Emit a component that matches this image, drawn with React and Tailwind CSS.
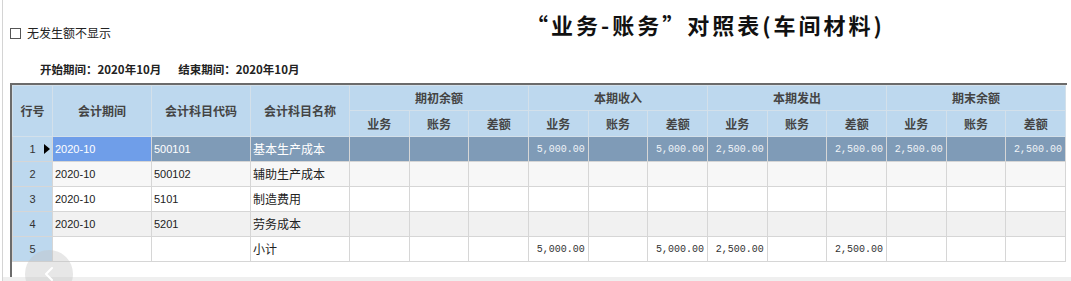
import React from 'react';

const groups = ['期初余额', '本期收入', '本期发出', '期末余额'];
const subs = ['业务', '账务', '差额'];

const rows = [
  { no: 1, period: '2020-10', code: '500101', name: '基本生产成本', vals: ['', '', '', '5,000.00', '', '5,000.00', '2,500.00', '', '2,500.00', '2,500.00', '', '2,500.00'], selected: true },
  { no: 2, period: '2020-10', code: '500102', name: '辅助生产成本', vals: Array(12).fill(''), bg: 'bg-[#f7f7f7]' },
  { no: 3, period: '2020-10', code: '5101', name: '制造费用', vals: Array(12).fill(''), bg: 'bg-white' },
  { no: 4, period: '2020-10', code: '5201', name: '劳务成本', vals: Array(12).fill(''), bg: 'bg-[#f1f1f1]' },
  { no: 5, period: '', code: '', name: '小计', vals: ['', '', '', '5,000.00', '', '5,000.00', '2,500.00', '', '2,500.00', '', '', ''], bg: 'bg-white' },
];

const cjk = "font-['Noto_Sans_CJK_SC',sans-serif]";

export default function App() {
  return (
    <div className={`relative w-[1071px] h-[281px] overflow-hidden bg-white ${cjk}`}>
      <div className="ml-[2px] h-full border-l border-[#d4d4d4] flex flex-col">
        {/* top bar */}
        <div className="h-[53px] flex items-start relative">
          <label className="flex items-center gap-[6px] pl-[7px] pt-[24px] text-[12px] text-[#222]">
            <span className="w-[11px] h-[11px] border border-[#555] bg-white" />
            无发生额不显示
          </label>
          <h1 className="absolute left-[523px] top-[9px] text-[22px] font-bold text-[#111] tracking-[3px] leading-[30px] whitespace-nowrap">
            “业务-账务”对照表(车间材料)
          </h1>
        </div>
        <div className="h-[30px] flex items-center gap-[17px] pl-[37px] pt-[3px] text-[11.5px] font-bold text-[#222]">
          <span>开始期间：2020年10月</span>
          <span>结束期间：2020年10月</span>
        </div>

        {/* grid frame */}
        <div className="ml-[7px] h-[194px] border-t-2 border-l-2 border-[#6b6b6b] w-[1057px] bg-white">
          <table className="table-fixed border-collapse w-[1053px] text-[11px]">
            <colgroup>
              <col className="w-[40px]" />
              <col className="w-[99px]" />
              <col className="w-[99px]" />
              <col className="w-[99px]" />
              {Array.from({ length: 12 }).map((_, i) => (
                <col key={i} className="w-[59.67px]" />
              ))}
            </colgroup>
            <thead className="bg-[#bdd8ee] text-[#444] font-bold text-[12px]">
              <tr className="h-[25px]">
                <th rowSpan={2} className="border border-[#d3e0ea] font-bold">行号</th>
                <th rowSpan={2} className="border border-[#d3e0ea] font-bold">会计期间</th>
                <th rowSpan={2} className="border border-[#d3e0ea] font-bold">会计科目代码</th>
                <th rowSpan={2} className="border border-[#d3e0ea] font-bold">会计科目名称</th>
                {groups.map((g) => (
                  <th key={g} colSpan={3} className="border border-[#d3e0ea] font-bold">{g}</th>
                ))}
              </tr>
              <tr className="h-[26px]">
                {groups.map((g) =>
                  subs.map((s) => (
                    <th key={g + s} className="border border-[#d3e0ea] font-bold">{s}</th>
                  ))
                )}
              </tr>
            </thead>
            <tbody>
              {rows.map((r) => {
                const rowCls = r.selected ? 'bg-[#7f9bb7] text-white' : `${r.bg} text-[#222]`;
                return (
                  <tr key={r.no} className={`h-[25px] ${rowCls}`}>
                    <td className="border border-[#d6d6d6] bg-[#bdd8ee] text-[#333] text-center relative font-['Liberation_Sans',sans-serif]">
                      {r.no}
                      {r.selected && (
                        <span className="absolute right-[2px] top-1/2 -translate-y-1/2 w-0 h-0 border-y-[5px] border-y-transparent border-l-[6px] border-l-black" />
                      )}
                    </td>
                    <td className={`border border-[#d6d6d6] px-[2px] font-['Liberation_Sans',sans-serif] ${r.selected ? 'bg-[#6f9ee9]' : ''}`}>
                      {r.period}
                    </td>
                    <td className="border border-[#d6d6d6] px-[2px] font-['Liberation_Sans',sans-serif]">{r.code}</td>
                    <td className="border border-[#d6d6d6] px-[2px] text-[12px]">{r.name}</td>
                    {r.vals.map((v, i) => (
                      <td key={i} className={`border border-[#d6d6d6] pr-[3px] text-right font-['Liberation_Mono',monospace] text-[10px] whitespace-nowrap ${r.selected ? 'text-[#f0f4f8]' : 'text-[#333]'}`}>
                        {v}
                      </td>
                    ))}
                  </tr>
                );
              })}
            </tbody>
          </table>
        </div>
        <div className="flex-1 bg-[#efefef]" />
      </div>

      {/* floating back button overlay */}
      <div className="absolute left-[25px] top-[250px] w-[48px] h-[48px] rounded-full bg-[#c4c4c4]/40 flex items-start justify-center pt-[16px]">
        <svg width="12" height="16" viewBox="0 0 12 16" fill="none">
          <path d="M9 2 L3 8 L9 14" stroke="white" strokeWidth="2" strokeLinecap="round" strokeLinejoin="round" />
        </svg>
      </div>
    </div>
  );
}
